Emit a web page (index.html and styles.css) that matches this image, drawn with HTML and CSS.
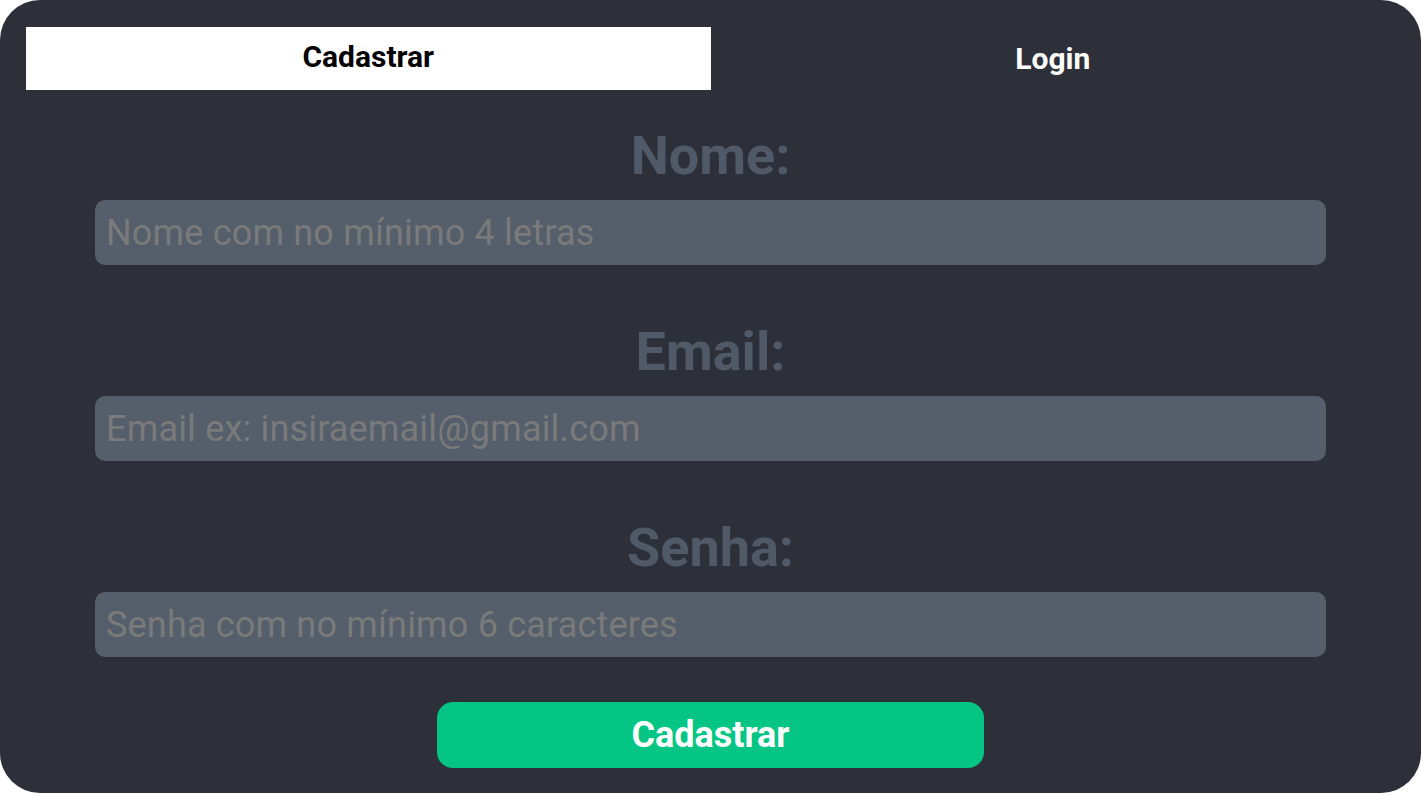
FILE: index.html
```html
<!DOCTYPE html>
<html lang="pt-BR">
<head>
<meta charset="utf-8">
<title>Cadastro</title>
<link rel="stylesheet" href="styles.css">
</head>
<body>
<div class="card">
  <div class="tabs">
    <button class="tab tab-active">Cadastrar</button>
    <button class="tab">Login</button>
  </div>
  <form class="form">
    <div class="field">
      <label class="label" for="nome">Nome:</label>
      <input class="input" id="nome" type="text" placeholder="Nome com no mínimo 4 letras">
    </div>
    <div class="field">
      <label class="label" for="email">Email:</label>
      <input class="input" id="email" type="email" placeholder="Email ex: insiraemail@gmail.com">
    </div>
    <div class="field">
      <label class="label" for="senha">Senha:</label>
      <input class="input" id="senha" type="password" placeholder="Senha com no mínimo 6 caracteres">
    </div>
    <button class="submit" type="button">Cadastrar</button>
  </form>
</div>
</body>
</html>
```

FILE: styles.css
```css
* {
  box-sizing: border-box;
}

html, body {
  margin: 0;
  padding: 0;
  background: #ffffff;
  font-family: Roboto, "Liberation Sans", sans-serif;
}

.card {
  width: 1421px;
  height: 793px;
  background: #2e3039;
  border-radius: 40px;
  padding: 27px 26px 0 26px;
  display: flex;
  flex-direction: column;
}

.tabs {
  display: flex;
  height: 63px;
}

.tab {
  flex: 1;
  height: 63px;
  border: none;
  margin: 0;
  padding: 0;
  background: transparent;
  color: #ffffff;
  font-family: Roboto, "Liberation Sans", sans-serif;
  font-weight: 700;
  font-size: 30px;
  line-height: normal;
  cursor: pointer;
}

.tab-active {
  background: #ffffff;
  color: #000000;
  padding-bottom: 4px;
}

.form {
  margin: 36px 69px 0 69px;
  display: flex;
  flex-direction: column;
  gap: 57px;
}

.field {
  display: flex;
  flex-direction: column;
  gap: 14px;
}

.label {
  display: block;
  text-align: center;
  font-size: 54px;
  font-weight: 700;
  line-height: 60px;
  color: #4f5968;
}

.input {
  width: 100%;
  height: 65px;
  border: none;
  border-radius: 10px;
  background: #555f6b;
  padding: 0 11px;
  font-family: Roboto, "Liberation Sans", sans-serif;
  font-size: 36px;
  letter-spacing: 0.18px;
  color: #dddddd;
  outline: none;
}

.input::placeholder {
  color: #7a7a7a;
  opacity: 1;
}

.submit {
  align-self: center;
  width: 547px;
  height: 66px;
  margin-top: -12px;
  border: none;
  border-radius: 16px;
  background: #05c584;
  color: #ffffff;
  font-family: Roboto, "Liberation Sans", sans-serif;
  font-weight: 700;
  font-size: 36px;
  cursor: pointer;
}
```
